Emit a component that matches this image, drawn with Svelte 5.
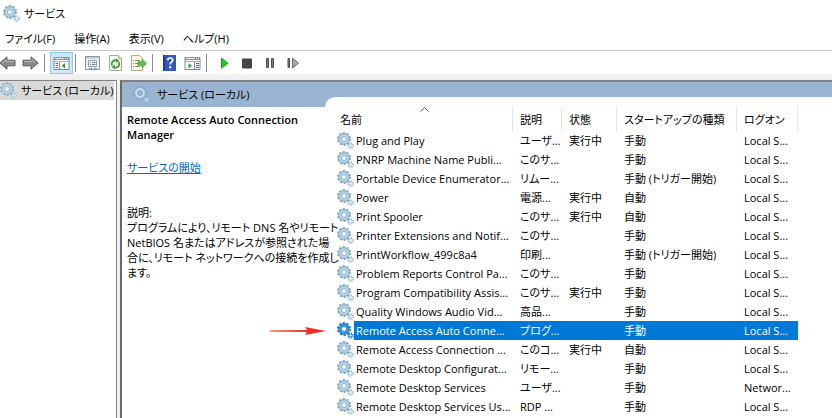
<script>
  const menus = ['ファイル(F)', '操作(A)', '表示(V)', 'ヘルプ(H)'];

  const tools = [
    { id: 'back', label: '戻る' },
    { id: 'forward', label: '進む' },
    { sep: true },
    { id: 'tree', label: 'コンソール ツリーの表示/非表示', active: true },
    { sep: true },
    { id: 'props', label: 'プロパティ' },
    { id: 'refresh', label: '最新の情報に更新' },
    { id: 'export', label: '一覧のエクスポート' },
    { sep: true },
    { id: 'help', label: 'ヘルプ' },
    { id: 'pane', label: '操作ウィンドウの表示/非表示' },
    { sep: true },
    { id: 'play', label: 'サービスの開始' },
    { id: 'stop', label: 'サービスの停止' },
    { id: 'pause', label: 'サービスの一時停止' },
    { id: 'restart', label: 'サービスの再起動' }
  ];

  const services = [
    { name: 'Plug and Play', desc: 'ユーザ...', state: '実行中', start: '手動', logon: 'Local S...' },
    { name: 'PNRP Machine Name Publi...', desc: 'このサ...', state: '', start: '手動', logon: 'Local S...' },
    { name: 'Portable Device Enumerator...', desc: 'リムー...', state: '', start: '手動 (トリガー開始)', logon: 'Local S...' },
    { name: 'Power', desc: '電源...', state: '実行中', start: '自動', logon: 'Local S...' },
    { name: 'Print Spooler', desc: 'このサ...', state: '実行中', start: '自動', logon: 'Local S...' },
    { name: 'Printer Extensions and Notif...', desc: 'このサ...', state: '', start: '手動', logon: 'Local S...' },
    { name: 'PrintWorkflow_499c8a4', desc: '印刷...', state: '', start: '手動 (トリガー開始)', logon: 'Local S...' },
    { name: 'Problem Reports Control Pa...', desc: 'このサ...', state: '', start: '手動', logon: 'Local S...' },
    { name: 'Program Compatibility Assis...', desc: 'このサ...', state: '実行中', start: '手動', logon: 'Local S...' },
    { name: 'Quality Windows Audio Vid...', desc: '高品...', state: '', start: '手動', logon: 'Local S...' },
    { name: 'Remote Access Auto Conne...', desc: 'プログ...', state: '', start: '手動', logon: 'Local S...' },
    { name: 'Remote Access Connection ...', desc: 'このコ...', state: '実行中', start: '自動', logon: 'Local S...' },
    { name: 'Remote Desktop Configurat...', desc: 'リモー...', state: '', start: '手動', logon: 'Local S...' },
    { name: 'Remote Desktop Services', desc: 'ユーザ...', state: '', start: '手動', logon: 'Networ...' },
    { name: 'Remote Desktop Services Us...', desc: 'RDP ...', state: '', start: '手動', logon: 'Local S...' }
  ];

  let selected = $state(10);
</script>

{#snippet gear(kind)}
  <svg class="gear {kind}" width="17" height="17" viewBox="0 0 17 17" aria-hidden="true">
    <circle class="teeth" cx="7" cy="7" r="6" fill="none" stroke-width="2" stroke-dasharray="2 1.77" />
    <circle class="ring" cx="7" cy="7" r="4" fill="none" stroke-width="3" />
    <circle class="rim" cx="7" cy="7" r="5.4" fill="none" stroke-width=".8" />
    <circle class="rim hole" cx="7" cy="7" r="2.5" stroke-width=".8" />
    <circle class="teeth" cx="13.6" cy="13.6" r="2.6" fill="none" stroke-width="1.4" stroke-dasharray="1.1 .94" />
    <circle class="ring hole" cx="13.6" cy="13.6" r="1.6" stroke-width="1.2" />
  </svg>
{/snippet}

{#snippet toolIcon(id)}
  <svg width="17" height="16" viewBox="0 0 17 16" aria-hidden="true">
    {#if id === 'back'}
      <path d="M.8 8 8 1.8v3.4h8v5.6H8v3.4z" fill="#8b8b8b" stroke="#5e5e5e" />
      <path d="M3 8 7 4.5v2h8" fill="none" stroke="#b5b5b5" />
    {:else if id === 'forward'}
      <path d="M16.2 8 9 1.8v3.4H1v5.6h8v3.4z" fill="#8b8b8b" stroke="#5e5e5e" />
      <path d="M2 6.5h8v-2L13.5 8" fill="none" stroke="#b5b5b5" />
    {:else if id === 'tree' || id === 'pane'}
      <path d="M1 2.5h15v12H1z" fill="#fff" stroke="#7c8797" />
      <path d="M1 2h15v3H1z" fill="#8592a4" />
      <path d="M2 3.5h9M12 3.5h1M14 3.5h1" stroke="#e8edf4" />
      <path d="M1 6.5h15" stroke="#a9b2bf" />
      {#if id === 'tree'}
        <path d="M6.5 7v7.5" stroke="#7c8797" />
        <path d="M2.5 8.5H5M2.5 10.5H5M2.5 12.5H5" stroke="#3e73b8" />
        <path d="M12 8v5.4l-3.5-2.7z" fill="#2fa62f" />
      {:else}
        <path d="M10.5 7v7.5" stroke="#7c8797" />
        <path d="M12 8.5h3M12 10.5h3M12 12.5h3" stroke="#3e73b8" />
        <path d="M4.5 8v5.4L8 10.7z" fill="#2fa62f" />
      {/if}
    {:else if id === 'props'}
      <path d="M1.5 1.5h14v13h-14z" fill="#eef1f4" stroke="#8a929b" />
      <path d="M2 3h13" stroke="#aab4bf" />
      <path d="M4.5 5.5h8v6h-8z" fill="#fff" stroke="#8fa0b3" />
      <path d="M6 7.5h1M8 7.5h3.5M6 9.5h1M8 9.5h3.5" stroke="#6d8199" />
      <path d="M5 13.3h3M9.5 13.3h3" stroke="#6d9dcc" />
    {:else if id === 'refresh'}
      <path d="M2.5.5h9l3 3v12h-12z" fill="#fbfbf8" stroke="#aaa99f" />
      <path d="M11.5.5v3h3" fill="#e6e6df" stroke="#aaa99f" />
      <path d="M5.2 10.5A3.5 3.5 0 0 1 9.8 5.7M11.8 7.3A3.5 3.5 0 0 1 7.3 12.2" fill="none" stroke="#35a435" stroke-width="1.8" />
      <path d="m9 3.3 3.6 2.8L9 8zM8 9.7l-3.5 2L8 14.6z" fill="#35a435" />
    {:else if id === 'export'}
      <path d="M1.5.5h8l3 3v12h-11z" fill="#fdf8df" stroke="#b3ab85" />
      <path d="M3 5.5h1M5 5.5h5M3 8.5h1M5 8.5h4M3 11.5h1M5 11.5h5" stroke="#8c8878" />
      <path d="M8 6.8h4V4.2l4.6 4.3-4.6 4.3v-2.6H8z" fill="#5cc94b" stroke="#34a22e" stroke-width=".7" />
    {:else if id === 'help'}
      <path d="M2 0h13v16H2z" fill="#3458c0" />
      <path d="M2 0h2v16H2z" fill="#203b92" />
      <path d="M6.7 5.2Q6.7 3 9.2 3t2.5 2.1Q11.7 6.5 10.3 7.3 9.2 8 9.2 9.6" fill="none" stroke="#fff" stroke-width="1.7" />
      <circle cx="9.2" cy="12.3" r="1.2" fill="#fff" />
    {:else if id === 'play'}
      <path d="M6.5 3.2v10L13 8.2z" fill="#28c728" stroke="#16a016" />
    {:else if id === 'stop'}
      <rect x="4" y="3.5" width="10" height="10" rx="1" fill="#454545" />
    {:else if id === 'pause'}
      <path d="M5.500 3.500h2v9h-2zM10.500 3.500h2v9h-2z" fill="#777" stroke="#505050" />
    {:else if id === 'restart'}
      <path d="M4 3.500h1.500v9H4z" fill="#777" stroke="#505050" />
      <path d="M8.500 3.200V13l6-4.900z" fill="#a9a9a9" stroke="#666" />
    {/if}
  </svg>
{/snippet}

<div class="window">
  <header class="titlebar">
    {@render gear('')}
    <span>サービス</span>
  </header>

  <nav class="menubar">
    {#each menus as menu}
      <button>{menu}</button>
    {/each}
  </nav>

  <div class="toolbar">
    {#each tools as tool}
      {#if tool.sep}
        <span class="sep"></span>
      {:else}
        <button class:active={tool.active} aria-label={tool.label}>{@render toolIcon(tool.id)}</button>
      {/if}
    {/each}
  </div>

  <div class="content">
    <aside class="tree">
      <button class="node">
        {@render gear('faded')}
        <span>サービス (ローカル)</span>
      </button>
    </aside>

    <main>
      <div class="caption">
        {@render gear('pale')}
        <span>サービス (ローカル)</span>
      </div>

      <div class="extended">
        <section class="info">
          <h1>Remote Access Auto Connection<br />Manager</h1>
          <a href="#start">サービスの開始</a>
          <p>
            説明:<br />
            プログラムにより、リモート DNS 名やリモート<br />
            NetBIOS 名またはアドレスが参照された場<br />
            合に、リモート ネットワークへの接続を作成し<br />
            ます。
          </p>
          <svg class="arrow" width="58" height="12" viewBox="0 0 58 12" aria-hidden="true">
            <path d="M1 5.500 38 5 36 2l21 4-21 4 2-3L1 6.500z" fill="#ee3024" />
          </svg>
        </section>

        <section class="list">
          <table>
            <colgroup>
              <col class="c-name" />
              <col class="c-desc" />
              <col class="c-state" />
              <col class="c-start" />
              <col class="c-logon" />
            </colgroup>
            <thead>
              <tr>
                <th>
                  名前
                  <svg class="sort" width="9" height="5" viewBox="0 0 9 5" aria-hidden="true">
                    <path d="M.5 4.500 4.500.7l4 3.800" fill="none" stroke="#555" />
                  </svg>
                </th>
                <th>説明</th>
                <th>状態</th>
                <th>スタートアップの種類</th>
                <th>ログオン</th>
              </tr>
            </thead>
            <tbody>
              {#each services as service, i}
                <tr class:selected={i === selected} onclick={() => (selected = i)}>
                  <td>
                    <div class="name">
                      {@render gear(i === selected ? 'picked' : '')}
                      <span>{service.name}</span>
                    </div>
                  </td>
                  <td>{service.desc}</td>
                  <td>{service.state}</td>
                  <td>{service.start}</td>
                  <td>{service.logon}</td>
                </tr>
              {/each}
            </tbody>
          </table>
        </section>
      </div>
    </main>
  </div>
</div>

<style>
  :global(body) {
    margin: 0;
    background: #fff;
  }
  .window {
    display: flex;
    flex-direction: column;
    height: 100vh;
    overflow: hidden;
    color: #000;
    font: 11px/15px "Open Sans", "Noto Sans CJK JP", sans-serif;
    font-feature-settings: "palt";
    white-space: nowrap;
  }
  button {
    margin: 0;
    padding: 0;
    border: 0;
    background: none;
    color: inherit;
    font: inherit;
    font-feature-settings: inherit;
  }
  svg { display: block; flex: none; }

  .teeth { stroke: #86a9c4; }
  .ring { stroke: #b5d5ea; }
  .rim { stroke: #6f9cbd; }
  .hole { fill: #fff; }
  .faded { opacity: .75; }
  .pale .teeth, .pale .rim { stroke: #7ea6c6; }
  .pale .ring { stroke: #c6e2f2; }
  .pale .hole { fill: #99b4d1; }
  .picked .teeth, .picked .rim { stroke: #1e78c4; }
  .picked .ring { stroke: #3c94dc; }

  .titlebar {
    display: flex;
    align-items: center;
    gap: 4px;
    height: 26px;
    padding-left: 3px;
  }
  .menubar {
    display: flex;
    align-items: center;
    gap: 19px;
    height: 25px;
    padding-left: 5px;
    border-bottom: 1px solid #c8c8c8;
    box-sizing: border-box;
  }
  .toolbar {
    display: flex;
    align-items: center;
    height: 23px;
    margin-left: -4px;
  }
  .toolbar button {
    display: flex;
    align-items: center;
    justify-content: center;
    width: 23px;
    height: 22px;
    box-sizing: border-box;
  }
  .toolbar .active {
    border: 1px solid #90c8f6;
    background: #cce8ff;
  }
  .sep {
    width: 1px;
    height: 18px;
    margin: 0 5px 0 2px;
    background: #8c8c8c;
  }

  .content {
    display: flex;
    flex: 1;
    min-height: 0;
    padding-top: 6px;
    background: #f0f0f0;
  }
  .tree {
    flex: 0 0 117px;
    min-width: 0;
    box-sizing: border-box;
    border-top: 1px solid #828282;
    border-right: 1px solid #828282;
    background: #fff;
  }
  .node {
    display: flex;
    align-items: center;
    gap: 4px;
    height: 19px;
    background: #d9d9d9;
  }
  main {
    display: flex;
    flex: 1;
    flex-direction: column;
    min-width: 0;
    margin-left: 3px;
    border-top: 2px solid #828282;
    border-left: 2px solid #696969;
    background: #fff;
  }
  .caption {
    display: flex;
    flex: none;
    align-items: center;
    gap: 7px;
    height: 25px;
    padding-left: 11px;
    background: #99b4d1;
  }
  .extended {
    display: flex;
    flex: 1;
    min-height: 0;
  }
  .info {
    position: relative;
    z-index: 1;
    flex: 0 0 203px;
    min-width: 0;
    box-sizing: border-box;
    padding: 5px 0 0 5px;
  }
  h1 {
    margin: 0 0 18px;
    font-size: 11px;
    font-weight: 600;
    line-height: 15px;
  }
  a { color: #0066cc; }
  p { margin: 30px 0 0; }
  .arrow {
    position: absolute;
    top: 218px;
    right: -2px;
  }

  .list {
    flex: 1;
    min-width: 0;
    margin-top: -10px;
    padding-left: 12px;
    border-top-left-radius: 10px;
    background: #fff;
  }
  table {
    width: 461px;
    border-collapse: collapse;
    table-layout: fixed;
  }
  .c-name { width: 176px; }
  .c-desc { width: 49px; }
  .c-state { width: 55px; }
  .c-start { width: 120px; }
  .c-logon { width: 61px; }
  th {
    position: relative;
    height: 24px;
    padding: 10px 0 0 7px;
    background: linear-gradient(#e5e5e5, #e5e5e5) right bottom / 1px 24px no-repeat;
    font-weight: 400;
    text-align: left;
  }
  th:first-child { padding-left: 3px; }
  .sort {
    position: absolute;
    top: 10px;
    left: 83px;
  }
  td {
    height: 19px;
    padding: 0 0 0 7px;
    line-height: 19px;
  }
  td:first-child { padding: 0; }
  .name {
    display: flex;
    align-items: center;
  }
  .name span {
    flex: 1;
    padding-left: 2px;
  }
  .selected { color: #fff; }
  .selected td:not(:first-child), .selected .name span { background: #0078d7; }
</style>
